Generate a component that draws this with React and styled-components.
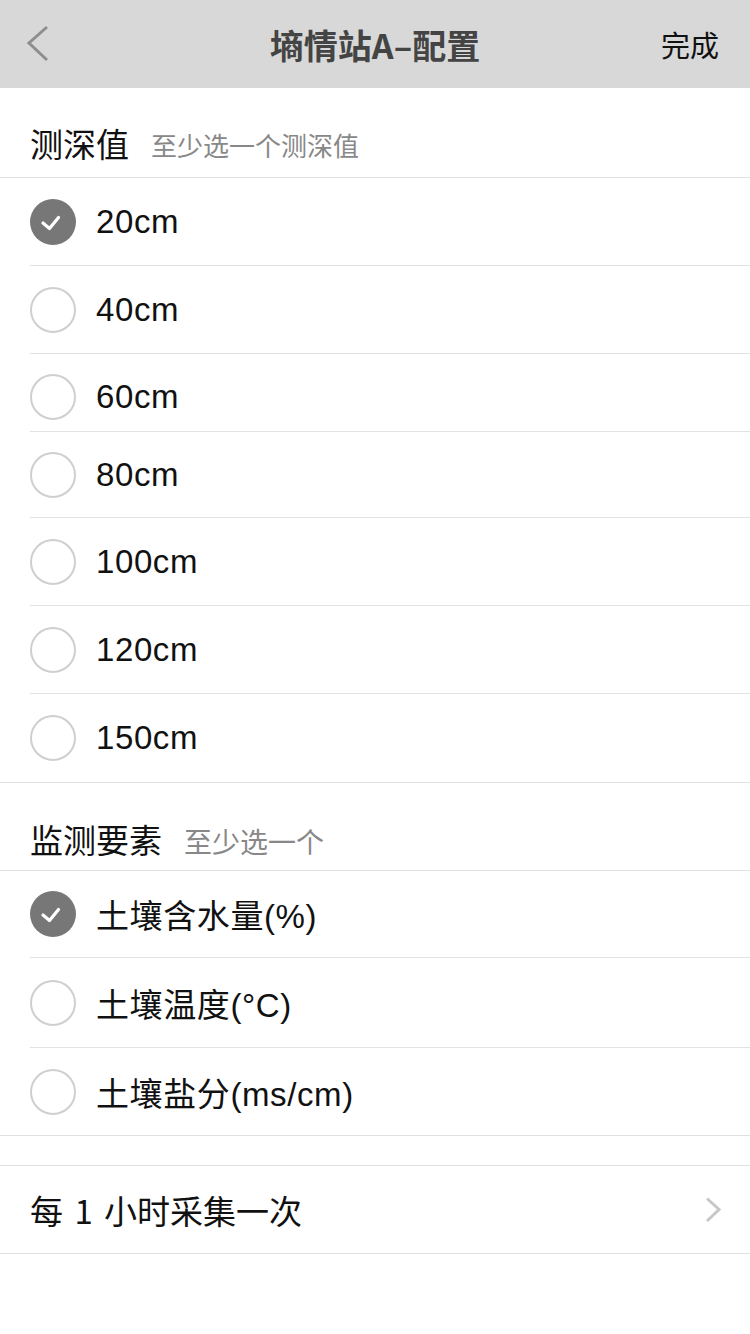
import React from "react";
import styled, { createGlobalStyle } from "styled-components";

const Global = createGlobalStyle`
  html, body { margin: 0; padding: 0; background: #fff; }
  body { font-family: "Liberation Sans", "Noto Sans CJK SC", sans-serif; color: #111; }
  * { box-sizing: border-box; }
`;

const Page = styled.div`
  width: 750px;
  min-height: 1334px;
  background: #fff;
`;

const NavBar = styled.header`
  height: 88px;
  background: #d8d8d8;
  display: grid;
  grid-template-columns: 120px 1fr 120px;
  align-items: center;
`;

const BackBtn = styled.div`
  padding-left: 26px;
  display: flex;
  align-items: center;
`;

const Title = styled.h1`
  margin: 0;
  text-align: center;
  font-size: 34px;
  font-weight: 700;
  color: #444;
  font-family: "Noto Sans CJK SC", sans-serif;
`;

const Done = styled.div`
  text-align: right;
  padding-right: 31px;
  font-size: 29px;
  color: #111;
  font-family: "Noto Sans CJK SC", sans-serif;
`;

const SectionHead = styled.div`
  height: ${(p) => p.$h}px;
  display: flex;
  align-items: center;
  padding: ${(p) => p.$pt}px 0 0 30px;
  border-bottom: 1px solid #e0e0e0;
`;

const HeadTitle = styled.span`
  font-size: 33px;
  color: #111;
  font-family: "Noto Sans CJK SC", sans-serif;
`;

const HeadHint = styled.span`
  font-size: ${(p) => p.$size}px;
  color: #888;
  margin-left: 22px;
  padding-top: 4px;
  font-family: "Noto Sans CJK SC", sans-serif;
`;

const List = styled.div`
  border-bottom: 1px solid #e0e0e0;
  padding-left: 30px;
`;

const Row = styled.div`
  height: ${(p) => p.$h}px;
  display: flex;
  align-items: center;
  border-bottom: ${(p) => (p.$last ? "none" : "1px solid #e3e3e3")};
  padding-top: ${(p) => p.$pt || 0}px;
`;

const Check = styled.div`
  width: 46px;
  height: 46px;
  border-radius: 50%;
  flex: none;
  background: ${(p) => (p.$on ? "#777" : "#fff")};
  border: ${(p) => (p.$on ? "none" : "2px solid #cfcfcf")};
  display: flex;
  align-items: center;
  justify-content: center;
`;

const Label = styled.span`
  margin-left: 20px;
  font-size: 33px;
  color: #111;
  letter-spacing: 0.6px;
`;

const Spacer = styled.div`
  height: 30px;
  border-bottom: 1px solid #e0e0e0;
`;

const LinkRow = styled.div`
  height: 88px;
  display: flex;
  align-items: center;
  justify-content: space-between;
  padding: 0 29px 0 30px;
  border-bottom: 1px solid #e0e0e0;
`;

const LinkText = styled.span`
  font-size: 33px;
  color: #111;
  word-spacing: 4px;
  font-family: "Noto Sans CJK SC", sans-serif;
`;

const Tick = () => (
  <svg width="46" height="46" viewBox="0 0 46 46">
    <polyline points="13,24 19.5,29.5 28.5,18.5" fill="none" stroke="#fff" strokeWidth="3.2" strokeLinecap="round" strokeLinejoin="round" />
  </svg>
);

const depths = [
  { v: "20cm", on: true, h: 88 },
  { v: "40cm", h: 88 },
  { v: "60cm", h: 78, pt: 8 },
  { v: "80cm", h: 86 },
  { v: "100cm", h: 88 },
  { v: "120cm", h: 88 },
  { v: "150cm", h: 88, last: true },
];

const elements = [
  { v: "土壤含水量(%)", on: true, h: 87 },
  { v: "土壤温度(°C)", h: 90 },
  { v: "土壤盐分(ms/cm)", h: 87, last: true },
];

export default function App() {
  return (
    <Page>
      <Global />
      <NavBar>
        <BackBtn>
          <svg width="26" height="40" viewBox="0 0 26 40">
            <polyline points="21,3 3,19 21,36" fill="none" stroke="#8e8e8e" strokeWidth="3" />
          </svg>
        </BackBtn>
        <Title>墒情站A–配置</Title>
        <Done>完成</Done>
      </NavBar>

      <SectionHead $h={90} $pt={20}>
        <HeadTitle>测深值</HeadTitle>
        <HeadHint $size={26}>至少选一个测深值</HeadHint>
      </SectionHead>
      <List>
        {depths.map((d) => (
          <Row key={d.v} $h={d.h} $pt={d.pt} $last={d.last}>
            <Check $on={d.on}>{d.on && <Tick />}</Check>
            <Label>{d.v}</Label>
          </Row>
        ))}
      </List>

      <SectionHead $h={88} $pt={24}>
        <HeadTitle>监测要素</HeadTitle>
        <HeadHint $size={28}>至少选一个</HeadHint>
      </SectionHead>
      <List>
        {elements.map((d) => (
          <Row key={d.v} $h={d.h} $last={d.last}>
            <Check $on={d.on}>{d.on && <Tick />}</Check>
            <Label>{d.v}</Label>
          </Row>
        ))}
      </List>

      <Spacer />
      <LinkRow>
        <LinkText>每 1 小时采集一次</LinkText>
        <svg width="16" height="26" viewBox="0 0 16 26">
          <polyline points="2,1.5 14,12.5 2,24" fill="none" stroke="#c8c8c8" strokeWidth="3" />
        </svg>
      </LinkRow>
    </Page>
  );
}
